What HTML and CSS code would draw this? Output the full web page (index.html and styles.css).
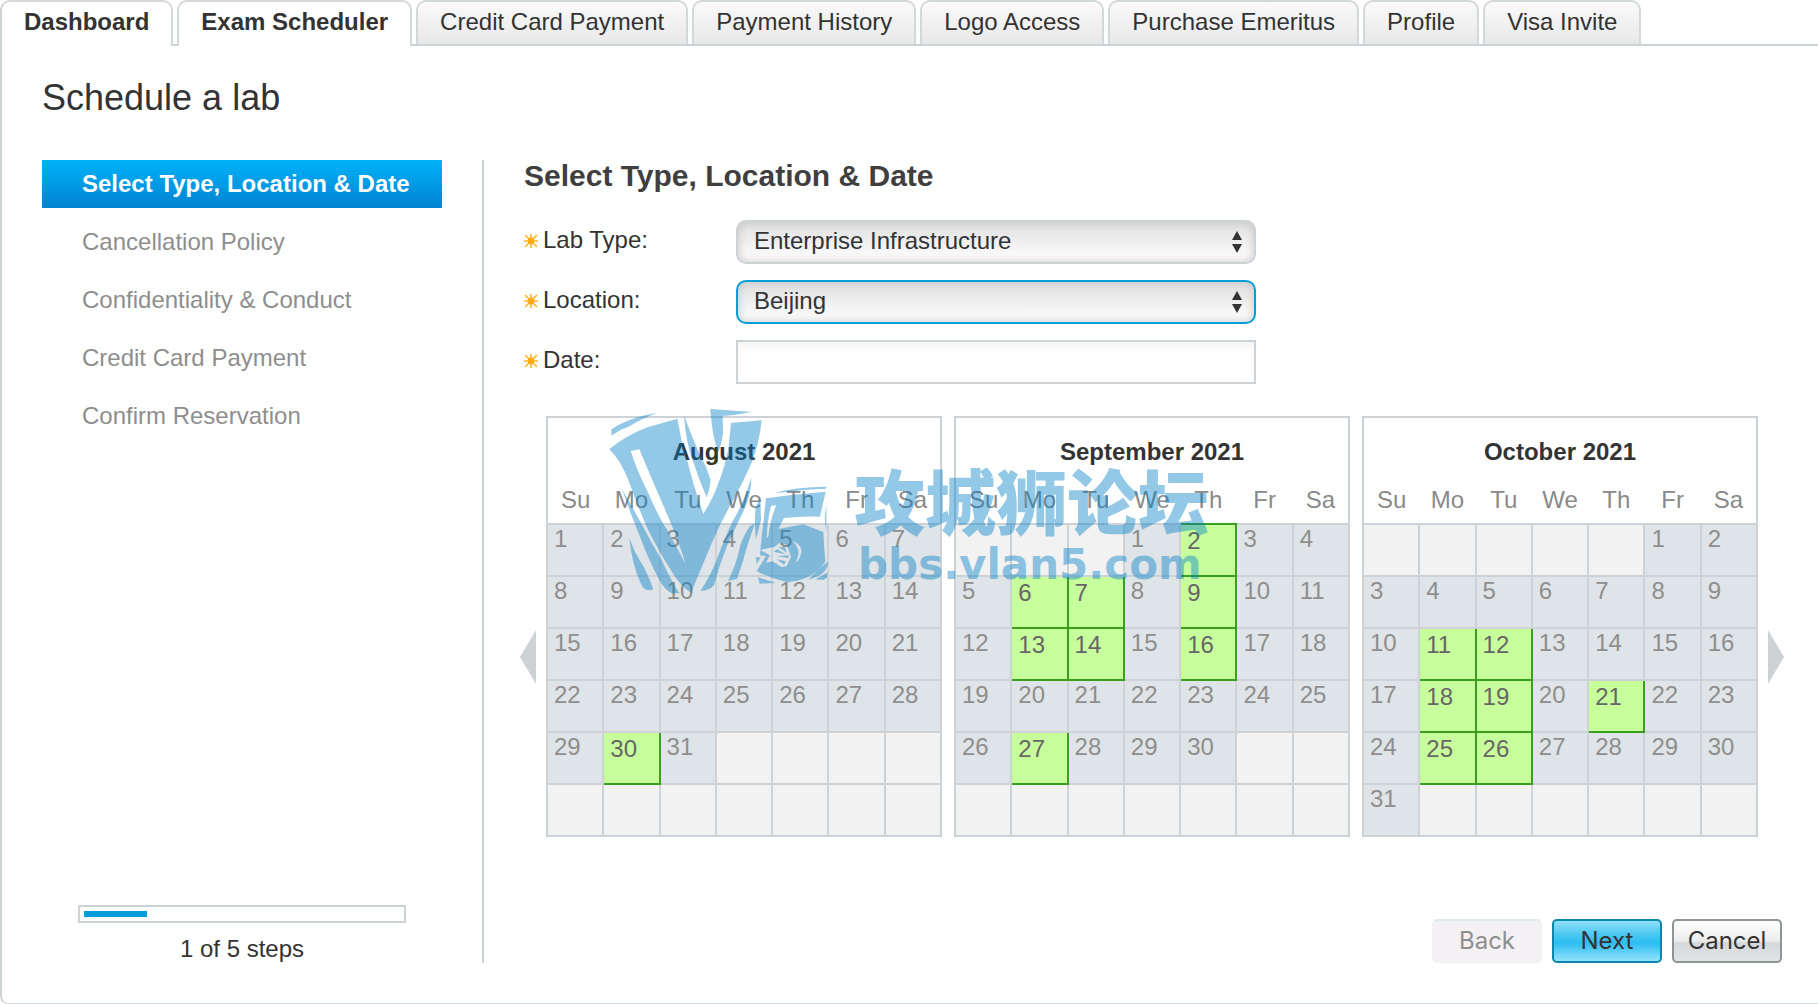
FILE: index.html
```html
<!DOCTYPE html>
<html lang="en">
<head>
<meta charset="utf-8">
<title>Exam Scheduler</title>
<link rel="stylesheet" href="styles.css">
</head>
<body>
<nav class="tabs">
  <a class="tab tab-open" href="#dashboard">Dashboard</a>
  <a class="tab tab-open" href="#scheduler" aria-current="page">Exam Scheduler</a>
  <a class="tab" href="#payment">Credit Card Payment</a>
  <a class="tab" href="#history">Payment History</a>
  <a class="tab" href="#logo">Logo Access</a>
  <a class="tab" href="#emeritus">Purchase Emeritus</a>
  <a class="tab" href="#profile">Profile</a>
  <a class="tab" href="#visa">Visa Invite</a>
</nav>
<div class="panel">
  <h1 class="title">Schedule a lab</h1>
  <div class="wizard">
    <aside class="sidebar">
      <ol class="steps">
        <li class="step step-current">Select Type, Location &amp; Date</li>
        <li class="step">Cancellation Policy</li>
        <li class="step">Confidentiality &amp; Conduct</li>
        <li class="step">Credit Card Payment</li>
        <li class="step">Confirm Reservation</li>
      </ol>
      <div class="status">
        <progress class="bar" id="bar" max="100" value="20"></progress>
        <label class="bar-label" for="bar">1 of 5 steps</label>
      </div>
    </aside>
    <main class="main">
      <h2 class="heading">Select Type, Location &amp; Date</h2>
      <form class="form">
        <svg width="0" height="0" class="defs" aria-hidden="true"><symbol id="star" viewBox="0 0 14 14"><path d="M7 0V14M0 7H14M1 1L13 13M13 1L1 13" stroke="#ffb62e" stroke-width="1.6"/><circle cx="7" cy="7" r="3.4" fill="#fbab18"/></symbol></svg>
        <div class="row">
          <label class="label" for="type"><svg class="star"><use href="#star"/></svg>Lab Type:</label>
          <span class="pick"><select class="select" id="type"><option>Enterprise Infrastructure</option></select><svg class="updown" viewBox="0 0 12 22"><path d="M6 0L11 9H1ZM1 13H11L6 22Z"/></svg></span>
        </div>
        <div class="row">
          <label class="label" for="place"><svg class="star"><use href="#star"/></svg>Location:</label>
          <span class="pick"><select class="select select-focus" id="place"><option>Beijing</option></select><svg class="updown" viewBox="0 0 12 22"><path d="M6 0L11 9H1ZM1 13H11L6 22Z"/></svg></span>
        </div>
        <div class="row">
          <label class="label" for="date"><svg class="star"><use href="#star"/></svg>Date:</label>
          <input class="input" id="date" type="text">
        </div>
      </form>
      <div class="months">
        <button class="turn" type="button" aria-label="Previous months"><svg class="turn-icon" viewBox="0 0 16 54"><path d="M16 0V54L0 27Z"/></svg></button>
        <div class="month-list">
        <table class="month">
          <thead>
            <tr><th class="month-name" colspan="7">August 2021</th></tr>
            <tr><th>Su</th><th>Mo</th><th>Tu</th><th>We</th><th>Th</th><th>Fr</th><th>Sa</th></tr>
          </thead>
          <tbody>
            <tr><td>1</td><td>2</td><td>3</td><td>4</td><td>5</td><td>6</td><td>7</td></tr>
            <tr><td>8</td><td>9</td><td>10</td><td>11</td><td>12</td><td>13</td><td>14</td></tr>
            <tr><td>15</td><td>16</td><td>17</td><td>18</td><td>19</td><td>20</td><td>21</td></tr>
            <tr><td>22</td><td>23</td><td>24</td><td>25</td><td>26</td><td>27</td><td>28</td></tr>
            <tr><td>29</td><td class="open">30</td><td>31</td><td></td><td></td><td></td><td></td></tr>
            <tr><td></td><td></td><td></td><td></td><td></td><td></td><td></td></tr>
          </tbody>
        </table>
        <table class="month">
          <thead>
            <tr><th class="month-name" colspan="7">September 2021</th></tr>
            <tr><th>Su</th><th>Mo</th><th>Tu</th><th>We</th><th>Th</th><th>Fr</th><th>Sa</th></tr>
          </thead>
          <tbody>
            <tr><td></td><td></td><td></td><td>1</td><td class="open">2</td><td>3</td><td>4</td></tr>
            <tr><td>5</td><td class="open">6</td><td class="open">7</td><td>8</td><td class="open">9</td><td>10</td><td>11</td></tr>
            <tr><td>12</td><td class="open">13</td><td class="open">14</td><td>15</td><td class="open">16</td><td>17</td><td>18</td></tr>
            <tr><td>19</td><td>20</td><td>21</td><td>22</td><td>23</td><td>24</td><td>25</td></tr>
            <tr><td>26</td><td class="open">27</td><td>28</td><td>29</td><td>30</td><td></td><td></td></tr>
            <tr><td></td><td></td><td></td><td></td><td></td><td></td><td></td></tr>
          </tbody>
        </table>
        <table class="month">
          <thead>
            <tr><th class="month-name" colspan="7">October 2021</th></tr>
            <tr><th>Su</th><th>Mo</th><th>Tu</th><th>We</th><th>Th</th><th>Fr</th><th>Sa</th></tr>
          </thead>
          <tbody>
            <tr><td></td><td></td><td></td><td></td><td></td><td>1</td><td>2</td></tr>
            <tr><td>3</td><td>4</td><td>5</td><td>6</td><td>7</td><td>8</td><td>9</td></tr>
            <tr><td>10</td><td class="open">11</td><td class="open">12</td><td>13</td><td>14</td><td>15</td><td>16</td></tr>
            <tr><td>17</td><td class="open">18</td><td class="open">19</td><td>20</td><td class="open">21</td><td>22</td><td>23</td></tr>
            <tr><td>24</td><td class="open">25</td><td class="open">26</td><td>27</td><td>28</td><td>29</td><td>30</td></tr>
            <tr><td>31</td><td></td><td></td><td></td><td></td><td></td><td></td></tr>
          </tbody>
        </table>
        </div>
        <button class="turn" type="button" aria-label="Next months"><svg class="turn-icon" viewBox="0 0 16 54"><path d="M0 0V54L16 27Z"/></svg></button>
        <svg class="watermark" viewBox="0 0 640 200">
          <g transform="scale(.33333)" fill-rule="evenodd">
            <path d="M64 88Q120 50 203 38Q150 58 120 78Q90 88 64 107Z"/>
            <path d="M58 148Q105 108 172 82L262 56Q272 120 292 182Q310 255 340 342Q372 290 385 250Q408 190 416 140L423 69L515 61Q508 130 484 190Q460 245 430 300Q395 360 365 430L303 578Q272 560 245 514Q205 452 170 380Q140 310 115 240Q90 178 58 148ZM122 153Q140 210 175 280Q205 350 235 396L287 492Q262 410 215 305Q180 225 148 148Z"/>
            <path d="M282 46Q305 110 330 165Q350 200 362 240Q360 265 350 292Q325 235 308 180Q288 130 282 46Z"/>
            <path d="M361 27L485 36Q440 45 398 48L399 100Q395 130 386 156Q368 120 361 27Z"/>
            <path d="M96 268Q135 335 158 378Q185 430 215 480Q240 535 268 580H245Q222 568 205 535Q172 470 150 410Q125 350 96 268Z"/>
            <path d="M118 415Q130 450 150 482Q172 515 190 568Q162 578 152 550Q125 490 118 415Z"/>
            <path d="M484 233Q484 285 462 330Q435 385 410 440Q388 495 372 555Q360 572 331 573Q360 530 380 480Q405 410 430 360Q465 300 484 233Z"/>
            <path d="M495 370Q470 440 460 480Q450 510 441 537L414 543Q440 490 450 440Q458 410 480 378Z"/>
            <path d="M497 322L511 295L513 360L498 418Q492 370 497 322Z"/>
            <path d="M553 280Q600 262 710 260L708 266Q640 268 553 280Z"/>
            <path d="M528 295Q620 282 707 275L690 350Q630 348 582 354L565 387L640 373L700 396Q702 440 706 485Q685 515 655 530Q625 545 590 546Q540 535 500 513L528 468L510 466L512 440L528 295ZM543 318L559 315Q540 360 535 410L530 414Q532 360 543 318ZM511 450L555 440L568 428L590 434L603 470L590 498L575 502L548 484L528 488L540 466ZM566 440L590 459L586 442ZM550 455L562 448L586 462ZM560 468L597 466L595 474ZM560 478L588 484L582 494ZM606 422Q640 436 633 460Q630 480 615 490Q640 450 606 422Z"/>
            <path d="M709 318V392Q700 355 709 318ZM498 472H512L500 492ZM504 532L558 549L509 551ZM655 540Q690 500 715 485Q712 515 685 528ZM676 538L712 518V532L700 540Z"/>
          </g>
          <text class="mark-cn" x="264" y="129">攻城狮论坛</text>
          <text class="mark-url" x="268" y="179">bbs.vlan5.com</text>
        </svg>
      </div>
      <div class="actions">
        <button class="btn btn-off" type="button" disabled>Back</button>
        <button class="btn btn-next" type="button">Next</button>
        <button class="btn" type="button">Cancel</button>
      </div>
    </main>
  </div>
</div>
</body>
</html>
```
FILE: styles.css
```css
* { box-sizing: border-box; }

body {
  margin: 0;
  min-height: 100vh;
  display: flex;
  flex-direction: column;
  background: #fff;
  color: #333;
  font: 24px/28px "Liberation Sans", Arial, sans-serif;
}

.tabs {
  display: flex;
  gap: 4px;
  height: 46px;
  border-bottom: 2px solid #cdd2d6;
}

.tab {
  height: 44px;
  padding: 6px 22px 0;
  border: 2px solid #d3d8db;
  border-bottom: 0;
  border-radius: 10px 10px 0 0;
  background: linear-gradient(#fafafa, #e8e8e8);
  color: #333;
  text-decoration: none;
  white-space: nowrap;
}

.tab-open {
  height: 46px;
  background: #fff;
  font-weight: bold;
}

.tab-open:first-child { border-left-color: #cdd2d6; }

.panel {
  flex: 1;
  display: flex;
  flex-direction: column;
  padding: 32px 34px 40px 40px;
  border-left: 2px solid #cdd2d6;
  border-bottom: 1px solid #d5d8da;
  border-bottom-left-radius: 8px;
}

.title {
  margin: 0 0 42px;
  font-size: 36px;
  line-height: 40px;
  font-weight: normal;
}

.wizard { flex: 1; display: flex; }

.sidebar {
  flex: none;
  width: 442px;
  padding-right: 40px;
  border-right: 2px solid #cdd2d6;
  display: flex;
  flex-direction: column;
}

.steps {
  margin: 0;
  padding: 0;
  list-style: none;
  display: grid;
  gap: 10px;
}

.step {
  padding: 10px 0 10px 40px;
  color: #8e8e8e;
  white-space: nowrap;
}

.step-current {
  background: linear-gradient(#00b2f8, #0083d2);
  color: #fff;
  font-weight: bold;
}

.status {
  margin: auto 36px 0;
  display: grid;
  gap: 12px;
  text-align: center;
}

.bar {
  appearance: none;
  width: 100%;
  height: 18px;
  padding: 4px;
  border: 2px solid #cdd2d6;
  background: #fff;
}

.bar::-webkit-progress-bar { background: #fff; }
.bar::-webkit-progress-value { background: #049fd9; }

.main {
  flex: 1;
  padding-left: 36px;
  display: flex;
  flex-direction: column;
}

.heading {
  margin: 0 4px 28px;
  font-size: 30px;
  line-height: 32px;
  color: #3f3f3f;
}

.form {
  display: grid;
  gap: 16px;
  padding-left: 4px;
}

.defs { position: absolute; }

.row {
  display: grid;
  grid-template-columns: 212px 520px;
}

.label {
  display: flex;
  align-items: center;
  gap: 5px;
  height: 40px;
}

.star { width: 14px; height: 14px; margin-top: 2px; }

.pick { position: relative; }

.select, .input {
  display: block;
  width: 100%;
  height: 44px;
  border: 2px solid #cdd2d6;
  font: inherit;
  color: inherit;
  outline: 0;
}

.select {
  appearance: none;
  padding: 0 16px 2px;
  border-radius: 10px;
  background: linear-gradient(#dfdfdf, #fff);
  box-shadow: inset 0 0 8px #c4c4c4;
}

.select-focus { border-color: #049fd9; }

.input {
  padding: 0 16px;
  background: linear-gradient(#f4f4f4, #fff 10px);
}

.updown {
  position: absolute;
  right: 13px;
  top: 11px;
  width: 12px;
  height: 22px;
  fill: #333;
  pointer-events: none;
}

.months {
  position: relative;
  margin-top: 32px;
  display: flex;
  align-items: center;
  gap: 10px;
}

.turn {
  flex: none;
  width: 16px;
  height: 54px;
  margin-top: 60px;
  padding: 0;
  border: 0;
  background: none;
}

.turn-icon {
  display: block;
  width: 16px;
  height: 54px;
  fill: #cdd2d5;
}

.month-list {
  flex: 1;
  display: grid;
  grid-template-columns: repeat(3, 1fr);
  gap: 12px;
}

.month {
  width: 100%;
  table-layout: fixed;
  border-collapse: collapse;
  border: 2px solid #cdd2d6;
}

.month th {
  padding: 20px 0 9px;
  color: #8a8a8a;
  font-weight: normal;
  text-align: center;
}

.month .month-name {
  padding: 20px 0 0;
  color: #333;
  font-weight: bold;
}

.month td {
  height: 52px;
  padding: 2px 0 0 6px;
  border: 2px solid #cdd2d6;
  background: #dee4e7;
  color: #8e8e8e;
  line-height: 24px;
  vertical-align: top;
}

.month td:empty { background: #f2f2f2; }

.month .open {
  padding-top: 4px;
  border-color: #3a9e1e;
  background: #c7ff9c;
  color: #666;
}

.watermark {
  position: absolute;
  left: 70px;
  top: -16px;
  width: 640px;
  height: 200px;
  fill: #007ec8;
  opacity: .42;
  pointer-events: none;
}

.mark-cn {
  font: 900 71px "Noto Sans CJK SC", sans-serif;
}

.mark-url { font: bold 42px "DejaVu Sans", sans-serif; }

.actions {
  margin: auto 2px 0 0;
  display: flex;
  justify-content: flex-end;
  gap: 10px;
}

.btn {
  width: 110px;
  height: 44px;
  padding: 0;
  border: 2px solid #8f9496;
  border-radius: 5px;
  background: linear-gradient(#fff, #ececec 50%, #d5d9dc 55%, #e0e4e6);
  color: #333;
  font: 24px/28px Inter, sans-serif;
}

.btn-next {
  border-color: #0e85ab;
  background: linear-gradient(#8fe0fa, #48c6f0 35%, #2cbdf0 55%, #93e2fd);
}

.btn-off {
  border-color: #f3f1f3;
  border-top-color: #dfeceb;
  background: #f3f1f3;
  color: #8e8e8e;
}
```
